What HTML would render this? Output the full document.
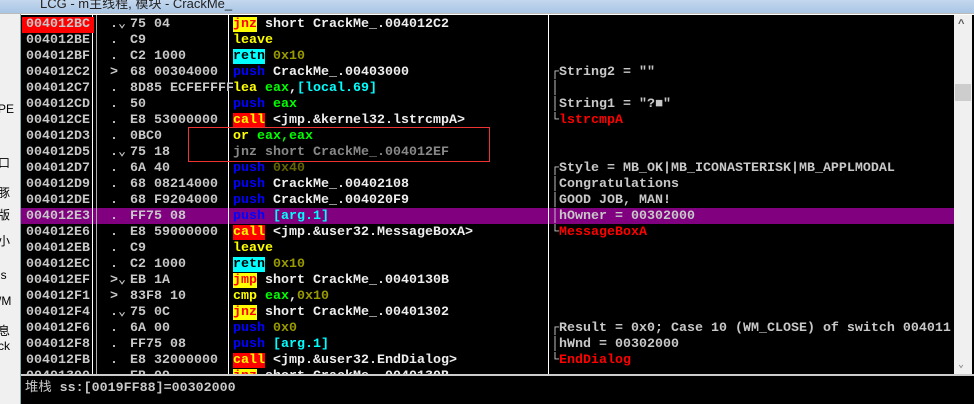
<!DOCTYPE html>
<html><head><meta charset="utf-8"><style>
*{margin:0;padding:0;box-sizing:border-box}
body{width:974px;height:404px;overflow:hidden;background:#fff;position:relative;font-family:"Liberation Mono","Noto Sans CJK SC",monospace;font-size:13.33px;font-weight:bold}
#title{position:absolute;left:0;top:0;width:974px;height:14px;background:linear-gradient(#c4d8ee,#a9c5e4);border-bottom:1px solid #bbb;overflow:hidden}
#title span{position:absolute;left:40px;top:-7px;font:13px "Liberation Sans","Noto Sans CJK SC",sans-serif;color:#222}
#left{position:absolute;left:0;top:14px;width:21px;height:390px;background:#f0f0f0;border-right:1px solid #8aa;font:12px "Liberation Sans","Noto Sans CJK SC",sans-serif;color:#000;overflow:hidden}
#left div{position:absolute;left:-2px}
#main{position:absolute;left:21px;top:15px;width:933px;height:360px;background:#000;overflow:hidden}
.r{position:absolute;left:0;width:933px;height:16px;line-height:16px;white-space:pre;color:#c8c8c8}
.r span{position:absolute;top:2px}
.a{left:5px}.d{left:89px}.h{left:109px}.m{left:212px}.c{left:530px}
.vl{position:absolute;top:0;height:360px;width:1px;background:#fff}
#sb{position:absolute;left:954px;top:15px;width:18px;height:360px;background:#f0f0f0}
#info{position:absolute;left:21px;top:374px;width:953px;height:30px;background:#000;border-top:2px solid #ccc}
.Y{background:#ff0;color:#f00}.R{background:#f00;color:#ff0}.C{background:#0ff;color:#000}
.b{color:#00f}.y{color:#ff0}.g{color:#0f0}.cy{color:#0ff}.o{color:#990}.w{color:#eee}.re{color:#f00}.gr{color:#888}
</style></head><body>
<div id="title"><span>LCG - m主线程, 模块 - CrackMe_</span></div>
<div id="left"><div style="top:88px">PE</div><div style="top:140px">口</div><div style="top:170px">豚</div><div style="top:192px">版</div><div style="top:218px">小</div><div style="top:254px">is</div><div style="top:280px">/M</div><div style="top:308px">息</div><div style="top:325px">ck</div></div>
<div id="main">
<div class="r" style="top:193px;background:#800080"></div>
<div class="vl" style="left:71px"></div><div class="vl" style="left:75px;background:#aaa"></div><div class="vl" style="left:207px"></div><div class="vl" style="left:527px"></div>
<div class="r" style="top:0"><span class="a" style="background:#f00;left:1px;padding:0 4px">004012BC</span><span class="d">.⌄</span><span class="h">75 04</span><span class="m"><b class="Y">jnz</b> <b class="w">short CrackMe_.004012C2</b></span></div>
<div class="r" style="top:16px"><span class="a">004012BE</span><span class="d">.</span><span class="h">C9</span><span class="m y">leave</span></div>
<div class="r" style="top:32px"><span class="a">004012BF</span><span class="d">.</span><span class="h">C2 1000</span><span class="m"><b class="C">retn</b> <b class="o">0x10</b></span></div>
<div class="r" style="top:48px"><span class="a">004012C2</span><span class="d">&gt;</span><span class="h">68 00304000</span><span class="m"><b class="b">push</b> <b class="w">CrackMe_.00403000</b></span><span class="c">┌String2 = ""</span></div>
<div class="r" style="top:64px"><span class="a">004012C7</span><span class="d">.</span><span class="h">8D85 ECFEFFFF</span><span class="m" style="background:#000"><b class="y">lea</b> <b class="g">eax</b><b class="w">,</b><b class="cy">[local.69]</b></span><span class="c">│</span></div>
<div class="r" style="top:80px"><span class="a">004012CD</span><span class="d">.</span><span class="h">50</span><span class="m"><b class="b">push</b> <b class="g">eax</b></span><span class="c">│String1 = "?■"</span></div>
<div class="r" style="top:96px"><span class="a">004012CE</span><span class="d">.</span><span class="h">E8 53000000</span><span class="m"><b class="R">call</b> <b class="w">&lt;jmp.&amp;kernel32.lstrcmpA&gt;</b></span><span class="c">└<b class="re">lstrcmpA</b></span></div>
<div class="r" style="top:112px"><span class="a">004012D3</span><span class="d">.</span><span class="h">0BC0</span><span class="m"><b class="y">or</b> <b class="g">eax,eax</b></span></div>
<div class="r" style="top:128px"><span class="a">004012D5</span><span class="d">.⌄</span><span class="h">75 18</span><span class="m gr">jnz short CrackMe_.004012EF</span></div>
<div class="r" style="top:144px"><span class="a">004012D7</span><span class="d">.</span><span class="h">6A 40</span><span class="m"><b class="b">push</b> <b style="color:#660">0x40</b></span><span class="c">┌Style = MB_OK|MB_ICONASTERISK|MB_APPLMODAL</span></div>
<div class="r" style="top:160px"><span class="a">004012D9</span><span class="d">.</span><span class="h">68 08214000</span><span class="m"><b class="b">push</b> <b class="w">CrackMe_.00402108</b></span><span class="c">│Congratulations</span></div>
<div class="r" style="top:176px"><span class="a">004012DE</span><span class="d">.</span><span class="h">68 F9204000</span><span class="m"><b class="b">push</b> <b class="w">CrackMe_.004020F9</b></span><span class="c">│GOOD JOB, MAN!</span></div>
<div class="r" style="top:192px"><span class="a">004012E3</span><span class="d">.</span><span class="h">FF75 08</span><span class="m"><b class="b">push</b> <b class="cy">[arg.1]</b></span><span class="c">│hOwner = 00302000</span></div>
<div class="r" style="top:208px"><span class="a">004012E6</span><span class="d">.</span><span class="h">E8 59000000</span><span class="m"><b class="R">call</b> <b class="w">&lt;jmp.&amp;user32.MessageBoxA&gt;</b></span><span class="c">└<b class="re">MessageBoxA</b></span></div>
<div class="r" style="top:224px"><span class="a">004012EB</span><span class="d">.</span><span class="h">C9</span><span class="m y">leave</span></div>
<div class="r" style="top:240px"><span class="a">004012EC</span><span class="d">.</span><span class="h">C2 1000</span><span class="m"><b class="C">retn</b> <b class="o">0x10</b></span></div>
<div class="r" style="top:256px"><span class="a">004012EF</span><span class="d">&gt;⌄</span><span class="h">EB 1A</span><span class="m"><b class="Y">jmp</b> <b class="w">short CrackMe_.0040130B</b></span></div>
<div class="r" style="top:272px"><span class="a">004012F1</span><span class="d">&gt;</span><span class="h">83F8 10</span><span class="m"><b class="y">cmp</b> <b class="g">eax</b><b class="w">,</b><b class="o">0x10</b></span></div>
<div class="r" style="top:288px"><span class="a">004012F4</span><span class="d">.⌄</span><span class="h">75 0C</span><span class="m"><b class="Y">jnz</b> <b class="w">short CrackMe_.00401302</b></span></div>
<div class="r" style="top:304px"><span class="a">004012F6</span><span class="d">.</span><span class="h">6A 00</span><span class="m"><b class="b">push</b> <b class="o">0x0</b></span><span class="c">┌Result = 0x0; Case 10 (WM_CLOSE) of switch 004011</span></div>
<div class="r" style="top:320px"><span class="a">004012F8</span><span class="d">.</span><span class="h">FF75 08</span><span class="m"><b class="b">push</b> <b class="cy">[arg.1]</b></span><span class="c">│hWnd = 00302000</span></div>
<div class="r" style="top:336px"><span class="a">004012FB</span><span class="d">.</span><span class="h">E8 32000000</span><span class="m"><b class="R">call</b> <b class="w">&lt;jmp.&amp;user32.EndDialog&gt;</b></span><span class="c">└<b class="re">EndDialog</b></span></div>
<div class="r" style="top:352px"><span class="a">00401300</span><span class="d">.</span><span class="h">EB 09</span><span class="m"><b class="Y">jnz</b> <b class="w">short CrackMe_.0040130B</b></span></div>
<div style="position:absolute;left:167px;top:112px;width:302px;height:35px;border:1px solid #e33"></div>
</div>
<div id="sb"><div style="position:absolute;top:4px;left:4px;color:#555;font-size:11px">^</div><div style="position:absolute;top:69px;left:1px;width:16px;height:17px;background:#cdcdcd"></div><div style="position:absolute;top:344px;left:4px;color:#888;font-size:10px">⌄</div></div>
<div style="position:absolute;left:972px;top:15px;width:2px;height:360px;background:#000"></div>
<div id="info"><span style="position:absolute;left:4px;top:0px;color:#c8c8c8;font-weight:normal">堆栈 <b>ss:[0019FF88]=00302000</b></span></div>
</body></html>
